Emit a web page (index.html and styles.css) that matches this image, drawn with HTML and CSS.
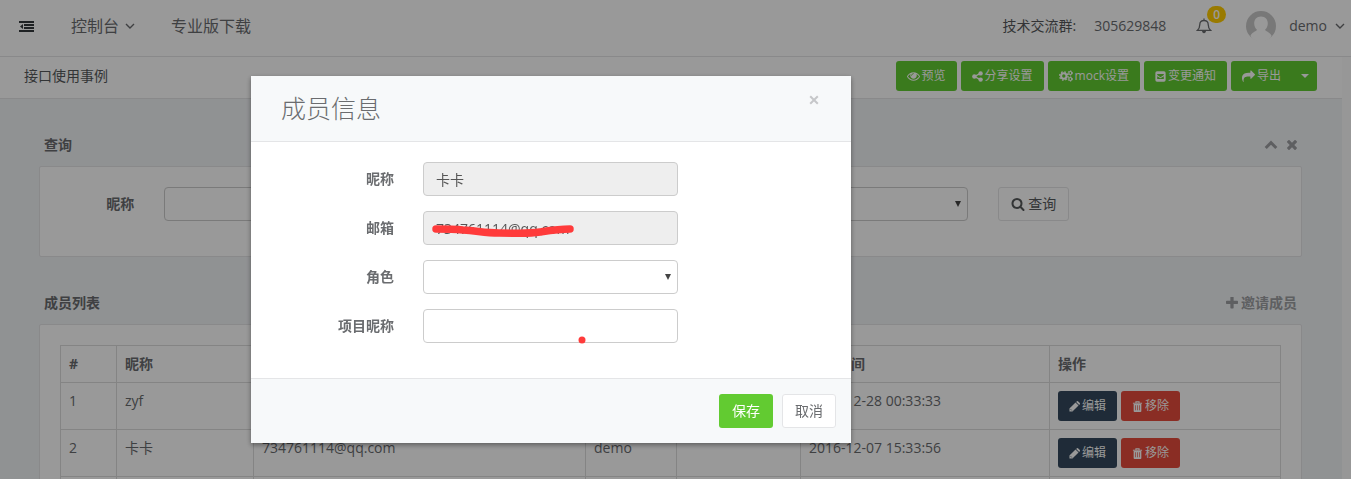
FILE: index.html
```html
<!DOCTYPE html>
<html lang="zh-CN">
<head>
<meta charset="utf-8">
<title>成员信息</title>
<link rel="stylesheet" href="styles.css">
</head>
<body>
<svg class="sprite" aria-hidden="true">
  <symbol id="i-dedent" viewBox="0 0 15 11"><path d="M0 0h15v2H0zM5 3h10v2H5zM5 6h10v2H5zM0 9h15v2H0zM4 3v5L1 5.500z"/></symbol>
  <symbol id="i-down" viewBox="0 0 10 6"><path d="M1 1l4 4 4-4" fill="none" stroke="currentColor" stroke-width="1.400"/></symbol>
  <symbol id="i-bell" viewBox="0 0 16 16"><path d="M8 .6v2M1.300 12.400h13.400c-1.700-1.400-2.500-3-2.500-5.900C12.200 3.900 10.600 2.500 8 2.500S3.800 3.900 3.800 6.500c0 2.900-.8 4.500-2.500 5.900z" fill="none" stroke="currentColor" stroke-width="1.300"/><path d="M6 12.800h4c0 1.500-.8 2.400-2 2.400s-2-.9-2-2.400z"/></symbol>
  <symbol id="i-eye" viewBox="0 64 1792 1792"><path d="M1664 960q-152-236-381-353 61 104 61 225 0 185-131.500 316.500t-316.500 131.500-316.500-131.500-131.500-316.500q0-121 61-225-229 117-381 353 133 205 333.500 326.500t434.500 121.500 434.500-121.500 333.500-326.500zm-720-384q0-20-14-34t-34-14q-125 0-214.500 89.500t-89.500 214.500q0 20 14 34t34 14 34-14 14-34q0-86 61-147t147-61q20 0 34-14t14-34zm848 384q0 34-20 69-140 230-376.500 368.500t-499.500 138.500-499.500-139-376.500-368q-20-35-20-69t20-69q140-229 376.500-368t499.500-139 499.500 139 376.500 368q20 35 20 69z"/></symbol>
  <symbol id="i-nodes" viewBox="0 0 12 12"><path d="M9.300 2.600L2.700 6l6.600 3.400" fill="none" stroke="currentColor" stroke-width="1.500"/><circle cx="9.400" cy="2.600" r="2.400"/><circle cx="2.600" cy="6" r="2.400"/><circle cx="9.400" cy="9.400" r="2.400"/></symbol>
  <symbol id="i-cogs" viewBox="0 0 14 12"><circle cx="4.800" cy="6" r="2.700" fill="none" stroke="currentColor" stroke-width="2"/><circle cx="4.800" cy="6" r="4.200" fill="none" stroke="currentColor" stroke-width="1.300" stroke-dasharray="1.650 1.650"/><circle cx="11.300" cy="3" r="1.500" fill="none" stroke="currentColor" stroke-width="1.200"/><circle cx="11.300" cy="3" r="2.300" fill="none" stroke="currentColor" stroke-width=".8" stroke-dasharray="1.200 1.200"/><circle cx="11.300" cy="9" r="1.500" fill="none" stroke="currentColor" stroke-width="1.200"/><circle cx="11.300" cy="9" r="2.300" fill="none" stroke="currentColor" stroke-width=".8" stroke-dasharray="1.200 1.200"/></symbol>
  <symbol id="i-mail" viewBox="0 0 12 12"><path fill-rule="evenodd" d="M2.200.4h7.600q1.800 0 1.800 1.800v7.600q0 1.800-1.800 1.800H2.200q-1.800 0-1.800-1.800V2.200q0-1.800 1.800-1.800zM2.400 3.200v1.100L6 6.800l3.600-2.500V3.200zM2.400 5.600v3.200h7.200V5.600L6 8z"/></symbol>
  <symbol id="i-share" viewBox="0 0 1792 1792"><path d="M1792 640q0 26-19 45l-512 512q-19 19-45 19t-45-19-19-45v-256h-224q-98 0-175.500 6t-154 21.500-133 42.500-105.500 69.500-80 101-48.500 138.500-17.500 181q0 55 5 123 0 6 2.500 23.500t2.500 26.500q0 15-8.500 25t-23.500 10q-16 0-28-17-7-9-13-22t-13.500-30-10.500-24q-127-285-127-451 0-199 53-333 162-403 875-403h224v-256q0-26 19-45t45-19 45 19l512 512q19 19 19 45z"/></symbol>
  <symbol id="i-search" viewBox="0 0 1792 1792"><path d="M1216 832q0-185-131.500-316.500t-316.500-131.500-316.500 131.500-131.500 316.500 131.500 316.500 316.500 131.500 316.500-131.500 131.500-316.500zm512 832q0 52-38 90t-90 38q-54 0-90-38l-343-342q-179 124-399 124-143 0-273.500-55.500t-225-150-150-225-55.500-273.500 55.500-273.500 150-225 225-150 273.500-55.500 273.500 55.500 225 150 150 225 55.500 273.500q0 220-124 399l343 343q37 37 37 90z"/></symbol>
  <symbol id="i-up" viewBox="0 0 14 10"><path d="M1.700 8L7 2.700 12.300 8" fill="none" stroke="currentColor" stroke-width="3"/></symbol>
  <symbol id="i-times" viewBox="300 400 1192 1256"><path d="M1490 1322q0 40-28 68l-136 136q-28 28-68 28t-68-28l-294-294-294 294q-28 28-68 28t-68-28l-136-136q-28-28-28-68t28-68l294-294-294-294q-28-28-28-68t28-68l136-136q28-28 68-28t68 28l294 294 294-294q28-28 68-28t68 28l136 136q28 28 28 68t-28 68l-294 294 294 294q28 28 28 68z"/></symbol>
  <symbol id="i-plus" viewBox="192 192 1408 1408"><path d="M1600 736v192q0 40-28 68t-68 28h-416v416q0 40-28 68t-68 28h-192q-40 0-68-28t-28-68v-416h-416q-40 0-68-28t-28-68v-192q0-40 28-68t68-28h416v-416q0-40 28-68t68-28h192q40 0 68 28t28 68v416h416q40 0 68 28t28 68z"/></symbol>
  <symbol id="i-pencil" viewBox="0 0 12 12"><path d="M.5 11.500V8.200l6.600-6.600 3.300 3.300-6.600 6.600zM7.800 1l.8-.7q.6-.5 1.200 0l2 2q.5.600 0 1.200l-.7.800z"/><path d="M1.600 8.800l1.600 1.600" stroke="#34495e" stroke-width=".7"/></symbol>
  <symbol id="i-trash" viewBox="0 0 12 12"><path d="M1 2.400h10M4.300 2V.8h3.400V2" fill="none" stroke="currentColor" stroke-width="1.200"/><path fill-rule="evenodd" d="M1.800 3.200h8.400V11q0 1-1 1H2.800q-1 0-1-1zM3.600 4.700v5.500h.7V4.700zM5.650 4.700v5.500h.7V4.700zM7.700 4.700v5.500h.7V4.700z"/></symbol>
  <symbol id="i-close" viewBox="0 0 10 10"><path d="M1.200 1.200l7.600 7.600M8.800 1.200L1.200 8.800" fill="none" stroke="currentColor" stroke-width="2"/></symbol>
</svg>

<header class="navbar">
  <button class="plain menu" aria-label="菜单"><svg class="dedent"><use href="#i-dedent"/></svg></button>
  <nav class="nav-links">
    <a href="#">控制台<svg class="down"><use href="#i-down"/></svg></a>
    <a href="#">专业版下载</a>
  </nav>
  <div class="nav-right">
    <span class="group">技术交流群:</span>
    <span class="number">305629848</span>
    <button class="plain bell" aria-label="通知"><svg><use href="#i-bell"/></svg><span class="badge">0</span></button>
    <button class="plain user">
      <svg class="avatar" viewBox="0 0 30 30"><circle cx="15" cy="15" r="15" fill="#c8c8c8"/><path d="M15 5.500c4.500 0 6.800 3 6.800 7 0 3-1.300 5.200-2.800 6.200.4 1.500 4.500 2 6.500 5.800C25 28 20 30.500 15 30.500S5 28 4.500 24.500c2-3.800 6.100-4.300 6.500-5.800-1.500-1-2.800-3.200-2.800-6.200 0-4 2.300-7 6.800-7z" fill="#fff"/></svg>
      <span>demo</span>
      <svg class="down"><use href="#i-down"/></svg>
    </button>
  </div>
</header>

<main class="content">
  <div class="subbar">
    <span>接口使用事例</span>
    <div class="actions">
      <button class="btn sm green"><svg class="i13"><use href="#i-eye"/></svg>预览</button>
      <button class="btn sm green"><svg class="i11"><use href="#i-nodes"/></svg>分享设置</button>
      <button class="btn sm green"><svg class="i14"><use href="#i-cogs"/></svg>mock设置</button>
      <button class="btn sm green"><svg class="i11"><use href="#i-mail"/></svg>变更通知</button>
      <div class="split">
        <button class="btn sm green"><svg class="i13"><use href="#i-share"/></svg>导出</button>
        <button class="btn sm green toggle" aria-label="更多"><span class="caret"></span></button>
      </div>
    </div>
  </div>

  <section class="section">
    <div class="section-head"><h2>查询</h2>
      <div class="tools"><svg class="up"><use href="#i-up"/></svg><svg class="times"><use href="#i-times"/></svg></div>
    </div>
    <form class="panel query">
      <label for="q-nick">昵称</label>
      <div class="cell"><input class="control" id="q-nick" type="text"></div>
      <label for="q-role">角色</label>
      <div class="cell"><div class="select"><select class="control" id="q-role"><option></option></select></div></div>
      <div class="cell"><button type="button" class="btn outline"><svg class="i14 square"><use href="#i-search"/></svg>查询</button></div>
    </form>
  </section>

  <section class="section">
    <div class="section-head"><h2>成员列表</h2>
      <a class="invite" href="#"><svg class="plus"><use href="#i-plus"/></svg>邀请成员</a>
    </div>
    <div class="panel">
      <table class="table">
        <colgroup><col class="c1"><col class="c2"><col class="c3"><col class="c4"><col class="c5"><col class="c6"><col class="c7"></colgroup>
        <thead><tr><th>#</th><th>昵称</th><th>邮箱</th><th>角色</th><th>项目昵称</th><th>加入时间</th><th>操作</th></tr></thead>
        <tbody>
          <tr><td>1</td><td>zyf</td><td></td><td></td><td></td><td>2016-12-28 00:33:33</td>
            <td><div class="row-actions"><button class="btn sm navy"><svg class="i11"><use href="#i-pencil"/></svg>编辑</button><button class="btn sm red"><svg class="i11"><use href="#i-trash"/></svg>移除</button></div></td></tr>
          <tr><td>2</td><td>卡卡</td><td>734761114@qq.com</td><td>demo</td><td></td><td>2016-12-07 15:33:56</td>
            <td><div class="row-actions"><button class="btn sm navy"><svg class="i11"><use href="#i-pencil"/></svg>编辑</button><button class="btn sm red"><svg class="i11"><use href="#i-trash"/></svg>移除</button></div></td></tr>
          <tr class="blank"><td></td><td></td><td></td><td></td><td></td><td></td><td></td></tr>
        </tbody>
      </table>
    </div>
  </section>
</main>

<div class="backdrop">
  <div class="modal" role="dialog" aria-labelledby="modal-title">
    <div class="modal-head">
      <h1 id="modal-title">成员信息</h1>
      <button class="plain close" aria-label="关闭"><svg><use href="#i-close"/></svg></button>
    </div>
    <form class="modal-body">
      <label for="m-nick">昵称</label>
      <input class="control" id="m-nick" type="text" value="卡卡" readonly>
      <label for="m-mail">邮箱</label>
      <div class="marked">
        <input class="control" id="m-mail" type="text" value="734761114@qq.com" readonly>
        <svg class="scribble" viewBox="0 0 255 34"><path d="M13 18C22 18 30 18 40 19C55 20 62 22 76 22C95 22 105 23 117 21C130 19 136 18 147 18" fill="none" stroke="#ff3b3b" stroke-width="7.500" stroke-linecap="round"/></svg>
      </div>
      <label for="m-role">角色</label>
      <div class="select"><select class="control" id="m-role"><option></option></select></div>
      <label for="m-pnick">项目昵称</label>
      <div class="marked">
        <input class="control" id="m-pnick" type="text">
        <svg class="scribble" viewBox="0 0 255 34"><circle cx="159" cy="31" r="3.500" fill="#ff3b3b"/></svg>
      </div>
    </form>
    <div class="modal-foot">
      <button class="btn green">保存</button>
      <button class="btn outline">取消</button>
    </div>
  </div>
</div>
</body>
</html>
```

FILE: styles.css
```css
* { box-sizing: border-box; }
body {
  margin: 0;
  height: 100vh;
  overflow: hidden;
  background: #fcfcfc;
  color: #6a6c6f;
  font: 14px/20px "Open Sans", "Noto Sans CJK SC", sans-serif;
}
button, input, select { font: inherit; color: inherit; }
button { cursor: pointer; }
a { color: inherit; text-decoration: none; }
h1, h2 { margin: 0; }
svg { fill: currentColor; flex: none; }
.sprite { position: absolute; width: 0; height: 0; }
.plain { border: 0; padding: 0; background: none; display: flex; align-items: center; }

.navbar {
  display: flex;
  align-items: center;
  height: 57px;
  padding: 0 6px 4px 19px;
  background: #fff;
  border-bottom: 1px solid #e4e5e7;
}
.menu { color: #34393c; }
.dedent { width: 15px; height: 11px; }
.nav-links { display: flex; gap: 36px; margin-left: 37px; font-size: 16px; }
.nav-links a { display: flex; align-items: center; gap: 6px; }
.down { width: 10px; height: 6px; }
.nav-right { display: flex; align-items: center; margin-left: auto; }
.group { color: #55585a; }
.number { margin-left: 18px; }
.bell { position: relative; margin-left: 30px; }
.bell svg { width: 16px; height: 16px; }
.badge {
  position: absolute;
  left: 11px;
  top: -12px;
  width: 19px;
  height: 17px;
  border-radius: 9px;
  background: #ffcc00;
  color: #fff;
  font-size: 12px;
  font-weight: 600;
  line-height: 17px;
}
.user { margin-left: 34px; }
.avatar { width: 30px; height: 30px; margin-right: 13px; }
.user .down { margin-left: 8px; }

.content { margin-right: 9px; background: #f1f3f6; height: calc(100vh - 57px); overflow: hidden; }
.subbar {
  display: flex;
  align-items: center;
  justify-content: space-between;
  height: 42px;
  padding: 0 25px 3px 24px;
  background: #fff;
  border-bottom: 1px solid #e4e5e7;
  color: #56595b;
}
.actions { display: flex; gap: 4px; }
.split { display: flex; }
.split .btn:first-child { border-radius: 3px 0 0 3px; }
.split .toggle { border-radius: 0 3px 3px 0; padding: 0; width: 25px; }
.caret { border: 4px solid transparent; border-top-color: #fff; border-bottom: 0; }

.btn {
  display: inline-flex;
  align-items: center;
  justify-content: center;
  gap: 3px;
  height: 34px;
  padding: 0 12px;
  border: 1px solid transparent;
  border-radius: 3px;
  white-space: nowrap;
}
.sm { height: 30px; padding: 0 10px; font-size: 12px; color: #fff; gap: 2px; }
.green { background: #62cb31; color: #fff; }
.navy { background: #34495e; }
.red { background: #e74c3c; }
.outline { background: #fff; border-color: #e4e5e7; }
.i11 { width: 11px; height: 11px; }
.i13 { width: 13px; height: 13px; }
.i14 { width: 14px; height: 12px; }
.square { height: 14px; }

.section { padding: 31px 40px 0 39px; }
.section + .section { padding-top: 30px; }
.section-head {
  display: flex;
  align-items: center;
  justify-content: space-between;
  height: 36px;
  padding: 0 5px 6px;
}
.section + .section .section-head { height: 37px; }
h2 { font-size: 14px; font-weight: 700; }
.tools, .invite { display: flex; align-items: center; color: #9d9fa2; }
.tools { gap: 9px; }
.up { width: 14px; height: 10px; }
.times { width: 10px; height: 11px; }
.invite { font-weight: 700; gap: 3px; }
.plus { width: 12px; height: 12px; }
.panel { background: #fff; border: 1px solid #e4e5e7; border-radius: 2px; padding: 20px; }
.query {
  display: grid;
  grid-template-columns: 1fr 3fr 1fr 4fr 3fr;
  padding: 20px 5px 35px;
}
label { font-weight: 700; text-align: right; line-height: 34px; }
.query label, .cell { padding: 0 15px; min-width: 0; }
.query .outline { color: #56595b; }
.control {
  display: block;
  width: 100%;
  height: 34px;
  padding: 6px 12px;
  border: 1px solid #ccc;
  border-radius: 4px;
  background: #fff;
  color: #555;
  appearance: none;
}
.control[readonly] { background: #eee; }
.select { position: relative; }
.select::after {
  content: "";
  position: absolute;
  right: 7px;
  top: 14px;
  border: 3px solid transparent;
  border-top: 6px solid #444;
  border-bottom: 0;
}

.table { width: 100%; border-collapse: collapse; table-layout: fixed; }
.table th, .table td { border: 1px solid #ddd; padding: 8px; text-align: left; vertical-align: top; }
.table .blank td { height: 47px; }
.c1 { width: 56px; }
.c2 { width: 137px; }
.c3 { width: 332px; }
.c4 { width: 91px; }
.c5 { width: 124px; }
.c6 { width: 249px; }
.row-actions { display: flex; gap: 4px; }

.backdrop {
  position: fixed;
  inset: 0;
  padding: 76px 0 0 251px;
  background: rgba(0, 0, 0, .4);
}
.modal { max-width: 600px; background: #fff; box-shadow: 0 2px 5px rgba(0, 0, 0, .4); }
.modal-head {
  display: flex;
  justify-content: space-between;
  padding: 15px 32px 15px 30px;
  background: #f7f9fa;
  border-bottom: 1px solid #e4e5e7;
}
h1 { font-size: 25px; font-weight: 300; line-height: 35px; }
.close { height: 17px; color: #c6c7c9; }
.close svg { width: 10px; height: 10px; }
.modal-body {
  display: grid;
  grid-template-columns: 123px 255px;
  gap: 15px 29px;
  padding: 20px 20px 35px;
}
.marked { position: relative; }
.scribble { position: absolute; inset: 0; width: 100%; height: 34px; pointer-events: none; overflow: visible; }
.modal-foot {
  display: flex;
  justify-content: flex-end;
  gap: 9px;
  padding: 15px;
  background: #f7f9fa;
  border-top: 1px solid #e4e5e7;
}
```
